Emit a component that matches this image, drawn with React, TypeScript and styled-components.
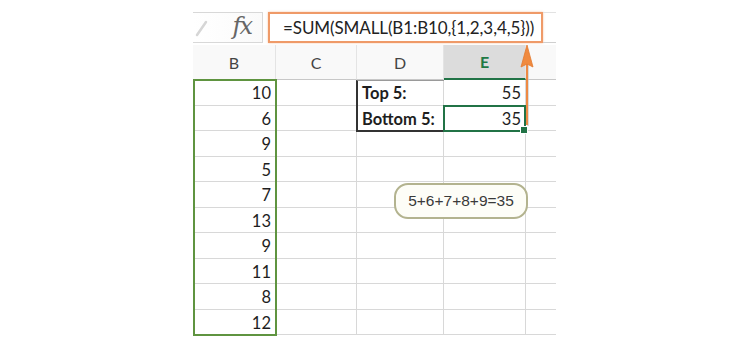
import React from 'react';
import styled, { createGlobalStyle } from 'styled-components';

const GlobalStyle = createGlobalStyle`
  html, body { margin: 0; padding: 0; background: #fff; }
  body { font-family: Lato, "Liberation Sans", sans-serif; }
`;

const COLS = [83, 81, 87, 82, 30];
const HEADERS = ['B', 'C', 'D', 'E', ''];
const ROW_H = 25.5;
const HEAD_H = 35;
const BAR_H = 31;
const GAP = 2;

const values = [10, 6, 9, 5, 7, 13, 9, 11, 8, 12];

const Page = styled.div`
  width: 750px;
  height: 353px;
  box-sizing: border-box;
  padding: 12px 0 0 193px;
  background: #fff;
  overflow: hidden;
`;

const Sheet = styled.div`
  position: relative;
  width: 363px;
  display: flex;
  flex-direction: column;
  gap: ${GAP}px;
`;

const FormulaRow = styled.div`
  display: flex;
  height: ${BAR_H}px;
  gap: 5px;
`;

const FxBox = styled.div`
  width: 70px;
  box-sizing: border-box;
  border: 1px solid #d8d8d8;
  border-left: none;
  background: linear-gradient(to right, #fff 0%, #fafafa 100%);
  display: flex;
  align-items: center;
  justify-content: space-between;
  padding: 0 11px 0 2px;
`;

const Fx = styled.span`
  font-family: "DejaVu Serif", "Liberation Serif", serif;
  font-style: italic;
  font-size: 24px;
  color: #666;
  letter-spacing: -2px;
  line-height: 1;
  margin-top: -3px;
`;

const FormulaBox = styled.div`
  width: 275px;
  box-sizing: border-box;
  border: 2px solid #ef9a68;
  box-shadow: 0 0 2px rgba(239, 140, 80, 0.5);
  display: flex;
  align-items: center;
  padding-left: 13px;
  font-size: 17px;
  letter-spacing: -0.1px;
  color: #222;
  white-space: nowrap;
`;

const BarTail = styled.div`
  flex: 1;
  margin-left: -5px;
  border-top: 1px solid #e2e2e2;
  border-bottom: 1px solid #cfcfcf;
`;

const Grid = styled.div`
  display: grid;
  grid-template-columns: ${COLS.map((c) => `${c}px`).join(' ')};
  grid-template-rows: ${HEAD_H}px repeat(10, ${ROW_H}px);
`;

const HeadCell = styled.div<{ $active?: boolean; $last?: boolean }>`
  box-sizing: border-box;
  display: flex;
  align-items: center;
  justify-content: center;
  font-size: 16px;
  color: ${(p) => (p.$active ? '#1f7a45' : '#444')};
  font-weight: ${(p) => (p.$active ? 700 : 400)};
  background: ${(p) => (p.$active ? '#dcdcdc' : '#f9f9f9')};
  border-right: ${(p) => (p.$last ? 'none' : '1px solid #e4e4e4')};
  border-bottom: ${(p) => (p.$active ? '2px solid #217346' : '1px solid #c8c8c8')};
`;

const Cell = styled.div<{ $bold?: boolean; $align?: string; $last?: boolean }>`
  box-sizing: border-box;
  display: flex;
  align-items: center;
  justify-content: ${(p) => (p.$align === 'left' ? 'flex-start' : 'flex-end')};
  padding: 2px 4px 0 5px;
  font-size: 16.5px;
  font-weight: ${(p) => (p.$bold ? 700 : 400)};
  color: #1e1e1e;
  border-right: ${(p) => (p.$last ? 'none' : '1px solid #d8d8d8')};
  border-bottom: 1px solid #d8d8d8;
  white-space: nowrap;
`;

const Frame = styled.div<{ $color: string; $width: number }>`
  position: absolute;
  box-sizing: border-box;
  border: ${(p) => p.$width}px solid ${(p) => p.$color};
  pointer-events: none;
`;

const LabelFrame = styled.div`
  position: absolute;
  box-sizing: border-box;
  border-left: 2px solid #333;
  border-bottom: 2px solid #333;
  border-top: 1px solid #9a9a9a;
`;

const Handle = styled.div`
  position: absolute;
  right: -4px;
  bottom: -4px;
  width: 6px;
  height: 6px;
  background: #217346;
  border: 1px solid #fff;
`;

const Callout = styled.div`
  position: absolute;
  left: 201px;
  top: 171px;
  width: 134px;
  height: 36px;
  box-sizing: border-box;
  border: 2px solid #b3b38f;
  border-radius: 14px;
  background: #fdfdf7;
  display: flex;
  align-items: center;
  justify-content: center;
  font-family: "Liberation Sans", Arial, sans-serif;
  font-size: 15.5px;
  color: #3a3a3a;
`;

const Arrow = styled.svg`
  position: absolute;
  left: 326px;
  top: 33px;
  overflow: visible;
`;

const colLeft = (i: number) => COLS.slice(0, i).reduce((a, b) => a + b, 0);
const rowTop = (r: number) => BAR_H + GAP + HEAD_H + r * ROW_H;

export default function App() {
  const cellsFor = (r: number) => {
    const d = r === 0 ? 'Top 5:' : r === 1 ? 'Bottom 5:' : '';
    const e = r === 0 ? '55' : r === 1 ? '35' : '';
    return [
      <Cell key={`b${r}`}>{values[r]}</Cell>,
      <Cell key={`c${r}`} />,
      <Cell key={`d${r}`} $bold $align="left">{d}</Cell>,
      <Cell key={`e${r}`}>{e}</Cell>,
      <Cell key={`f${r}`} $last />,
    ];
  };

  return (
    <>
      <GlobalStyle />
      <Page>
        <Sheet>
          <FormulaRow>
            <FxBox>
              <svg width="14" height="18" viewBox="0 0 14 18">
                <path d="M2 16 L11 3" stroke="#d6d6d6" strokeWidth="2.5" strokeLinecap="round" />
              </svg>
              <Fx>fx</Fx>
            </FxBox>
            <FormulaBox>=SUM(SMALL(B1:B10,{'{'}1,2,3,4,5{'}'}))</FormulaBox>
            <BarTail />
          </FormulaRow>

          <Grid>
            {HEADERS.map((h, i) => (
              <HeadCell key={i} $active={h === 'E'} $last={i === HEADERS.length - 1}>
                {h}
              </HeadCell>
            ))}
            {values.map((_, r) => cellsFor(r))}
          </Grid>

          <LabelFrame
            style={{ left: colLeft(2) - 1, top: rowTop(0), width: COLS[2] + 1, height: ROW_H * 2 + 1 }}
          />
          <Frame
            $color="#5f9440"
            $width={2.5}
            style={{ left: 0, top: rowTop(0) - 1, width: COLS[0] + 1, height: ROW_H * 10 + 2 }}
          />
          <Frame
            $color="#217346"
            $width={2}
            style={{ left: colLeft(3) - 1, top: rowTop(1) - 1, width: COLS[3] + 1, height: ROW_H + 2 }}
          >
            <Handle />
          </Frame>

          <Arrow width="16" height="82" viewBox="0 0 16 82">
            <line x1="9" y1="20" x2="9" y2="81" stroke="#c7c7c7" strokeWidth="2" opacity="0.6" />
            <line x1="8" y1="18" x2="8" y2="80" stroke="#ee8a44" strokeWidth="2" />
            <path d="M8 0 L14 22 L8 19 L2 22 Z" fill="#f08a3f" stroke="#e27a30" strokeWidth="0.8" strokeLinejoin="round" />
          </Arrow>

          <Callout>5+6+7+8+9=35</Callout>
        </Sheet>
      </Page>
    </>
  );
}
